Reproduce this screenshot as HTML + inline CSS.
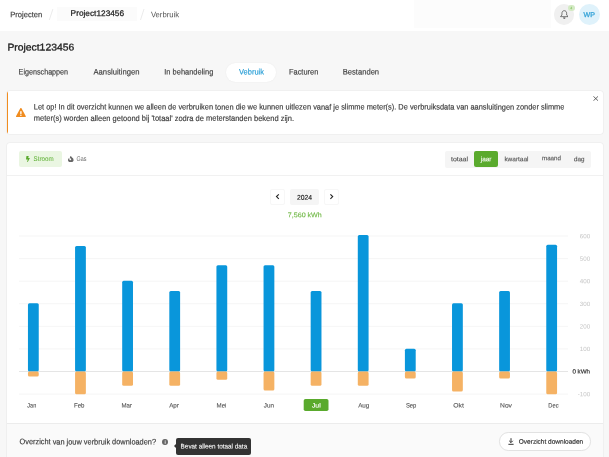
<!DOCTYPE html>
<html><head><meta charset="utf-8"><title>Verbruik</title>
<style>
html,body{margin:0;padding:0}
body{width:609px;height:457px;overflow:hidden;background:#f7f7f7;font-family:"Liberation Sans",sans-serif;color:#333;position:relative}
.abs{position:absolute}
.card{background:#fff;border-radius:3px;box-shadow:0 0 0 0.6px #ececec, 0 0 2px rgba(0,0,0,.05)}
svg text{text-rendering:geometricPrecision;font-family:"Liberation Sans",sans-serif;stroke-linejoin:round}
</style></head><body>
<div class="abs" style="left:0;top:0;width:609px;height:30.8px;background:#fff"></div>
<div class="abs" style="left:414px;top:0;width:137px;height:27.8px;background:#fcfcfc"></div>
<div class="abs" style="left:56.7px;top:6.9px;width:80.7px;height:14.1px;background:#fbfbfb"></div>
<svg class="abs" style="left:0;top:0" width="200" height="31"><path d="M52.9 9L49.3 20M144 9L140.5 20" stroke="#e6e6e6" stroke-width="0.8"/></svg>

<div class="abs" style="left:553.8px;top:4.1px;width:20.6px;height:20.6px;border-radius:50%;background:#f0f0f0"></div>
<svg class="abs" style="left:559.9px;top:9.8px" width="8.6" height="9.2" viewBox="0 0 17.2 18.4"><path d="M8.6 1.4c-2.8 0-4.7 2.1-4.7 4.9v3.9L1.2 12.6v0.7h14.8v-0.7L13.3 10.2V6.3C13.3 3.5 11.4 1.4 8.6 1.4z" fill="none" stroke="#444" stroke-width="1.4" stroke-linejoin="round"/><path d="M6.2 15a2.4 2.4 0 0 0 4.8 0z" fill="#444"/></svg>
<div class="abs" style="left:567.7px;top:4.5px;width:6.9px;height:6.9px;border-radius:50%;background:#d3eac4"></div>
<div class="abs" style="left:578.6px;top:3.6px;width:21.2px;height:21.2px;border-radius:50%;background:#dff2fb"></div>

<div class="abs" style="left:226.1px;top:62.5px;width:49.7px;height:19px;border-radius:9.5px;background:#fff;box-shadow:0 0 2px rgba(0,0,0,.06)"></div>

<div class="abs card" style="left:6.7px;top:91px;width:596.6px;height:43.4px;overflow:hidden"><div style="position:absolute;left:-0.4px;top:0;width:2.2px;height:100%;background:#f08c1f"></div></div>
<svg class="abs" style="left:16.2px;top:107.9px" width="9.8" height="9.3" viewBox="0 0 576 512" preserveAspectRatio="none"><path d="M569.517 440.013C587.975 472.007 564.806 512 527.94 512H48.054c-36.937 0-59.999-40.055-41.577-71.987L246.423 23.985c18.467-32.009 64.72-31.951 83.154 0l239.94 416.028zM288 354c-25.405 0-46 20.595-46 46s20.595 46 46 46 46-20.595 46-46-20.595-46-46-46zm-43.673-165.346l7.418 136c0.347 6.364 5.609 11.346 11.982 11.346h48.546c6.373 0 11.635-4.982 11.982-11.346l7.418-136c0.375-6.874-5.098-12.654-11.982-12.654h-63.383c-6.884 0-12.356 5.78-11.981 12.654z" fill="#f08c1f"/></svg>
<svg class="abs" style="left:592.7px;top:96px" width="5.5" height="5.1" viewBox="0 0 5.5 5.1"><path d="M0.4 0.3L5.1 4.8M5.1 0.3L0.4 4.8" stroke="#444" stroke-width="0.8"/></svg>

<div class="abs card" style="left:6.7px;top:142.9px;width:596.6px;height:330px"></div>
<div class="abs" style="left:19px;top:151.2px;width:42.7px;height:16.3px;border-radius:2px;background:#eaf6e2"></div>
<svg class="abs" style="left:26.2px;top:156.1px" width="3.9" height="6.2" viewBox="0 0 320 512"><path d="M296 160H180.6l42.6-129.8C227.2 15 215.7 0 200 0H56C44 0 33.8 8.9 32.2 20.8l-32 240C-1.7 275.2 9.5 288 24 288h118.7L96.6 482.5c-3.6 15.2 8 29.5 23.3 29.5 8.4 0 16.4-4.4 20.8-12l176-304c9.3-15.9-2.2-36-20.7-36z" fill="#5aaa2d"/></svg>
<svg class="abs" style="left:68.3px;top:156px" width="5.6" height="6.3" viewBox="0 0 384 512" preserveAspectRatio="none"><path d="M216 23.86c0-23.8-30.65-32.77-44.15-13.04C48 191.85 224 200 224 288c0 35.63-29.11 64.46-64.85 63.99C123.98 351.54 96 322.22 96 287.05v-85.51c0-21.7-26.47-32.23-41.43-16.5C27.8 213.16 0 261.33 0 320c0 105.87 86.13 192 192 192s192-86.13 192-192c0-170.29-168-193-168-296.14z" fill="#666"/></svg>

<div class="abs" style="left:444.7px;top:150.8px;width:146.3px;height:17.1px;border-radius:2px;background:#f5f5f5"></div>
<div class="abs" style="left:474.4px;top:151.3px;width:23.6px;height:16px;border-radius:2px;background:#5aaa2d"></div>
<div class="abs" style="left:6.7px;top:174.6px;width:596.6px;height:0.8px;background:#f1f1f1"></div>

<div class="abs" style="left:269.6px;top:188.6px;width:15.5px;height:16.2px;border-radius:2px;border:0.6px solid #f7f7f7;box-sizing:border-box;background:#fff"></div>
<div class="abs" style="left:290px;top:188.6px;width:29.1px;height:16.2px;border-radius:2px;background:#f5f5f5"></div>
<div class="abs" style="left:323.8px;top:188.6px;width:15.6px;height:16.2px;border-radius:2px;border:0.6px solid #f7f7f7;box-sizing:border-box;background:#fff"></div>
<svg class="abs" style="left:275px;top:193px" width="6" height="8" viewBox="0 0 6 8"><path d="M3.8 1.3L1.5 3.6l2.3 2.3" fill="none" stroke="#222" stroke-width="1.1"/></svg>
<svg class="abs" style="left:329px;top:193px" width="6" height="8" viewBox="0 0 6 8"><path d="M1.4 1.3L3.7 3.6L1.4 5.9" fill="none" stroke="#222" stroke-width="1.1"/></svg>

<div class="abs" style="left:6.7px;top:423.1px;width:596.6px;height:34px;background:#fafafa;border-top:0.8px solid #ececec;box-sizing:border-box"></div>
<div class="abs" style="left:162.1px;top:438.7px;width:5.9px;height:6.2px;border-radius:50%;background:#666"></div>
<div class="abs" style="left:176px;top:438px;width:75.1px;height:16.5px;border-radius:2px;background:#333"></div>
<div class="abs" style="left:173.6px;top:443.5px;width:0;height:0;border:2.5px solid transparent;border-right-color:#333;border-left:0"></div>
<div class="abs" style="left:498.6px;top:432.3px;width:92.6px;height:18.4px;border-radius:9.2px;border:0.7px solid #e2e2e2;box-sizing:border-box;background:#fff"></div>
<svg class="abs" style="left:507.5px;top:437.9px" width="6" height="6.8" viewBox="0 0 6 6.8"><path d="M3 0.2v4.2M1.2 2.8l1.8 1.8 1.8-1.8M0.4 6.3h5.2" fill="none" stroke="#333" stroke-width="1"/></svg>

<svg class="abs" style="left:0;top:0;will-change:transform" width="609" height="457" viewBox="0 0 609 457">
<line x1="19" x2="568" y1="236.02" y2="236.02" stroke="#f3f3f3" stroke-width="0.8"/><text x="590.2" y="238.22" font-size="6.2" fill="#c6c6c6" text-anchor="end" transform="rotate(0.06 590.2 238.22)">600</text>
<line x1="19" x2="568" y1="258.60" y2="258.60" stroke="#f3f3f3" stroke-width="0.8"/><text x="590.2" y="260.8" font-size="6.2" fill="#c6c6c6" text-anchor="end" transform="rotate(0.06 590.2 260.8)">500</text>
<line x1="19" x2="568" y1="281.18" y2="281.18" stroke="#f3f3f3" stroke-width="0.8"/><text x="590.2" y="283.38" font-size="6.2" fill="#c6c6c6" text-anchor="end" transform="rotate(0.06 590.2 283.38)">400</text>
<line x1="19" x2="568" y1="303.76" y2="303.76" stroke="#f3f3f3" stroke-width="0.8"/><text x="590.2" y="305.96" font-size="6.2" fill="#c6c6c6" text-anchor="end" transform="rotate(0.06 590.2 305.96)">300</text>
<line x1="19" x2="568" y1="326.34" y2="326.34" stroke="#f3f3f3" stroke-width="0.8"/><text x="590.2" y="328.54" font-size="6.2" fill="#c6c6c6" text-anchor="end" transform="rotate(0.06 590.2 328.54)">200</text>
<line x1="19" x2="568" y1="348.92" y2="348.92" stroke="#f3f3f3" stroke-width="0.8"/><text x="590.2" y="351.12" font-size="6.2" fill="#c6c6c6" text-anchor="end" transform="rotate(0.06 590.2 351.12)">100</text>
<line x1="19" x2="568" y1="394.08" y2="394.08" stroke="#f3f3f3" stroke-width="0.8"/><text x="590.2" y="396.28" font-size="6.2" fill="#c6c6c6" text-anchor="end" transform="rotate(0.06 590.2 396.28)">-100</text>
<line x1="19" x2="568" y1="371.50" y2="371.50" stroke="#dedede" stroke-width="0.8"/><text x="572.4" y="373.6" font-size="6.0" fill="#333" stroke="#333" stroke-width="0.18" textLength="17.6" lengthAdjust="spacingAndGlyphs" transform="rotate(0.06 581.2 373.6)">0 kWh</text>
<rect x="27.95" y="303.31" width="10.8" height="68.19" rx="1.5" fill="#0996db"/><rect x="27.95" y="371.50" width="10.8" height="4.97" rx="1.5" fill="#f5b264"/>
<rect x="75.07" y="245.96" width="10.8" height="125.54" rx="1.5" fill="#0996db"/><rect x="75.07" y="371.50" width="10.8" height="22.81" rx="1.5" fill="#f5b264"/>
<rect x="122.19" y="280.73" width="10.8" height="90.77" rx="1.5" fill="#0996db"/><rect x="122.19" y="371.50" width="10.8" height="14.23" rx="1.5" fill="#f5b264"/>
<rect x="169.31" y="290.89" width="10.8" height="80.61" rx="1.5" fill="#0996db"/><rect x="169.31" y="371.50" width="10.8" height="14.23" rx="1.5" fill="#f5b264"/>
<rect x="216.43" y="265.15" width="10.8" height="106.35" rx="1.5" fill="#0996db"/><rect x="216.43" y="371.50" width="10.8" height="8.35" rx="1.5" fill="#f5b264"/>
<rect x="263.55" y="265.15" width="10.8" height="106.35" rx="1.5" fill="#0996db"/><rect x="263.55" y="371.50" width="10.8" height="18.97" rx="1.5" fill="#f5b264"/>
<rect x="310.67" y="290.89" width="10.8" height="80.61" rx="1.5" fill="#0996db"/><rect x="310.67" y="371.50" width="10.8" height="14.23" rx="1.5" fill="#f5b264"/>
<rect x="357.79" y="235.12" width="10.8" height="136.38" rx="1.5" fill="#0996db"/><rect x="357.79" y="371.50" width="10.8" height="14.23" rx="1.5" fill="#f5b264"/>
<rect x="404.91" y="348.69" width="10.8" height="22.81" rx="1.5" fill="#0996db"/><rect x="404.91" y="371.50" width="10.8" height="7.00" rx="1.5" fill="#f5b264"/>
<rect x="452.03" y="303.31" width="10.8" height="68.19" rx="1.5" fill="#0996db"/><rect x="452.03" y="371.50" width="10.8" height="20.10" rx="1.5" fill="#f5b264"/>
<rect x="499.15" y="290.89" width="10.8" height="80.61" rx="1.5" fill="#0996db"/><rect x="499.15" y="371.50" width="10.8" height="7.00" rx="1.5" fill="#f5b264"/>
<rect x="546.27" y="244.83" width="10.8" height="126.67" rx="1.5" fill="#0996db"/><rect x="546.27" y="371.50" width="10.8" height="22.81" rx="1.5" fill="#f5b264"/>
<text x="27.35" y="407.6" font-size="6.3" fill="#555" stroke="#555" stroke-width="0.12" textLength="8.9" lengthAdjust="spacingAndGlyphs" transform="rotate(0.06 31.8 407.6)">Jan</text>
<text x="73.97" y="407.6" font-size="6.3" fill="#555" stroke="#555" stroke-width="0.12" textLength="10.5" lengthAdjust="spacingAndGlyphs" transform="rotate(0.06 79.2 407.6)">Feb</text>
<text x="121.39" y="407.6" font-size="6.3" fill="#555" stroke="#555" stroke-width="0.12" textLength="10.5" lengthAdjust="spacingAndGlyphs" transform="rotate(0.06 126.6 407.6)">Mar</text>
<text x="169.16" y="407.6" font-size="6.3" fill="#555" stroke="#555" stroke-width="0.12" textLength="9.8" lengthAdjust="spacingAndGlyphs" transform="rotate(0.06 174.1 407.6)">Apr</text>
<text x="216.53" y="407.6" font-size="6.3" fill="#555" stroke="#555" stroke-width="0.12" textLength="9.9" lengthAdjust="spacingAndGlyphs" transform="rotate(0.06 221.5 407.6)">Mei</text>
<text x="263.8" y="407.6" font-size="6.3" fill="#555" stroke="#555" stroke-width="0.12" textLength="10.2" lengthAdjust="spacingAndGlyphs" transform="rotate(0.06 268.9 407.6)">Jun</text>
<rect x="303.7" y="398.9" width="24.8" height="12.2" rx="1.8" fill="#5aaa2d"/><text x="311.92" y="407.6" font-size="6.3" fill="#fff" stroke="#fff" stroke-width="0.12" textLength="8.8" lengthAdjust="spacingAndGlyphs" transform="rotate(0.06 316.3 407.6)">Jul</text>
<text x="358.14" y="407.6" font-size="6.3" fill="#555" stroke="#555" stroke-width="0.12" textLength="11.2" lengthAdjust="spacingAndGlyphs" transform="rotate(0.06 363.7 407.6)">Aug</text>
<text x="405.91" y="407.6" font-size="6.3" fill="#555" stroke="#555" stroke-width="0.12" textLength="10.5" lengthAdjust="spacingAndGlyphs" transform="rotate(0.06 411.2 407.6)">Sep</text>
<text x="453.33" y="407.6" font-size="6.3" fill="#555" stroke="#555" stroke-width="0.12" textLength="10.5" lengthAdjust="spacingAndGlyphs" transform="rotate(0.06 458.6 407.6)">Okt</text>
<text x="500.05" y="407.6" font-size="6.3" fill="#555" stroke="#555" stroke-width="0.12" textLength="11.9" lengthAdjust="spacingAndGlyphs" transform="rotate(0.06 506.0 407.6)">Nov</text>
<text x="548.32" y="407.6" font-size="6.3" fill="#555" stroke="#555" stroke-width="0.12" textLength="10.2" lengthAdjust="spacingAndGlyphs" transform="rotate(0.06 553.4 407.6)">Dec</text>
<text x="10.3" y="17.2" font-size="8.0" fill="#3a3a3a" stroke="#3a3a3a" stroke-width="0.16" textLength="31.9" lengthAdjust="spacingAndGlyphs" transform="rotate(0.06 26.2 17.2)">Projecten</text>
<text x="70.6" y="15.9" font-size="8.1" fill="#222" stroke="#222" stroke-width="0.25" textLength="53.5" lengthAdjust="spacingAndGlyphs" transform="rotate(0.06 97.3 15.9)">Project123456</text>
<text x="150.9" y="17.2" font-size="8.0" fill="#555" textLength="28.2" lengthAdjust="spacingAndGlyphs" transform="rotate(0.06 165.0 17.2)">Verbruik</text>
<text x="583.6" y="17" font-size="6.9" fill="#38a4d8" stroke="#38a4d8" stroke-width="0.3" textLength="11.4" lengthAdjust="spacingAndGlyphs" transform="rotate(0.06 589.3 17)">WP</text>
<text x="571.2" y="9.3" font-size="3.6" fill="#6bb53f" text-anchor="middle" transform="rotate(0.06 571.2 9.3)">4</text>
<text x="7.4" y="50.5" font-size="9.8" fill="#222" stroke="#222" stroke-width="0.32" textLength="66.8" lengthAdjust="spacingAndGlyphs" transform="rotate(0.06 40.8 50.5)">Project123456</text>
<text x="18.6" y="74.45" font-size="8.0" fill="#444" stroke="#444" stroke-width="0.18" textLength="49.5" lengthAdjust="spacingAndGlyphs" transform="rotate(0.06 43.4 74.45)">Eigenschappen</text>
<text x="93.5" y="74.45" font-size="8.0" fill="#444" stroke="#444" stroke-width="0.18" textLength="46" lengthAdjust="spacingAndGlyphs" transform="rotate(0.06 116.5 74.45)">Aansluitingen</text>
<text x="164.3" y="74.45" font-size="8.0" fill="#444" stroke="#444" stroke-width="0.18" textLength="49" lengthAdjust="spacingAndGlyphs" transform="rotate(0.06 188.8 74.45)">In behandeling</text>
<text x="239" y="74.45" font-size="8.0" fill="#2a9fd6" stroke="#2a9fd6" stroke-width="0.18" textLength="25" lengthAdjust="spacingAndGlyphs" transform="rotate(0.06 251.5 74.45)">Vebruik</text>
<text x="289" y="74.45" font-size="8.0" fill="#444" stroke="#444" stroke-width="0.18" textLength="29.3" lengthAdjust="spacingAndGlyphs" transform="rotate(0.06 303.6 74.45)">Facturen</text>
<text x="342.8" y="74.45" font-size="8.0" fill="#444" stroke="#444" stroke-width="0.18" textLength="36.3" lengthAdjust="spacingAndGlyphs" transform="rotate(0.06 360.9 74.45)">Bestanden</text>
<text x="33.8" y="109.6" font-size="8.0" fill="#3a3a3a" stroke="#3a3a3a" stroke-width="0.16" textLength="98.88" lengthAdjust="spacingAndGlyphs" transform="rotate(0.06 83.2 109.6)">Let op! In dit overzicht kunnen</text>
<text x="134.74" y="109.6" font-size="8.0" fill="#3a3a3a" stroke="#3a3a3a" stroke-width="0.16" textLength="98.88" lengthAdjust="spacingAndGlyphs" transform="rotate(0.06 184.2 109.6)">we alleen de verbruiken tonen</text>
<text x="235.68" y="109.6" font-size="8.0" fill="#3a3a3a" stroke="#3a3a3a" stroke-width="0.16" textLength="103.42" lengthAdjust="spacingAndGlyphs" transform="rotate(0.06 287.4 109.6)">die we kunnen uitlezen vanaf je</text>
<text x="341.15" y="109.6" font-size="8.0" fill="#3a3a3a" stroke="#3a3a3a" stroke-width="0.16" textLength="66.71" lengthAdjust="spacingAndGlyphs" transform="rotate(0.06 374.5 109.6)">slimme meter(s). De</text>
<text x="409.92" y="109.6" font-size="8.0" fill="#3a3a3a" stroke="#3a3a3a" stroke-width="0.16" textLength="104.24" lengthAdjust="spacingAndGlyphs" transform="rotate(0.06 462.0 109.6)">verbruiksdata van aansluitingen</text>
<text x="516.21" y="109.6" font-size="8.0" fill="#3a3a3a" stroke="#3a3a3a" stroke-width="0.16" textLength="48.19" lengthAdjust="spacingAndGlyphs" transform="rotate(0.06 540.3 109.6)">zonder slimme</text>
<text x="33.8" y="120.9" font-size="8.0" fill="#3a3a3a" stroke="#3a3a3a" stroke-width="0.16" textLength="105.93" lengthAdjust="spacingAndGlyphs" transform="rotate(0.06 86.8 120.9)">meter(s) worden alleen getoond</text>
<text x="141.82" y="120.9" font-size="8.0" fill="#3a3a3a" stroke="#3a3a3a" stroke-width="0.16" textLength="62.09" lengthAdjust="spacingAndGlyphs" transform="rotate(0.06 172.9 120.9)">bij 'totaal' zodra de</text>
<text x="206.0" y="120.9" font-size="8.0" fill="#3a3a3a" stroke="#3a3a3a" stroke-width="0.16" textLength="88.0" lengthAdjust="spacingAndGlyphs" transform="rotate(0.06 250.0 120.9)">meterstanden bekend zijn.</text>
<text x="33.6" y="161.1" font-size="6.8" fill="#62b23a" stroke="#62b23a" stroke-width="0.05" textLength="20.0" lengthAdjust="spacingAndGlyphs" transform="rotate(0.06 43.6 161.1)">Stroom</text>
<text x="76.5" y="161.1" font-size="6.8" fill="#6a6a6a" textLength="9.9" lengthAdjust="spacingAndGlyphs" transform="rotate(0.06 81.5 161.1)">Gas</text>
<text x="451" y="161.3" font-size="6.5" fill="#444" stroke="#444" stroke-width="0.08" textLength="17" lengthAdjust="spacingAndGlyphs" transform="rotate(0.06 459.5 161.3)">totaal</text>
<text x="480.7" y="161.3" font-size="6.5" fill="#fff" stroke="#fff" stroke-width="0.1" textLength="10.8" lengthAdjust="spacingAndGlyphs" transform="rotate(0.06 486.1 161.3)">jaar</text>
<text x="504.4" y="161.3" font-size="6.5" fill="#444" stroke="#444" stroke-width="0.08" textLength="24.1" lengthAdjust="spacingAndGlyphs" transform="rotate(0.06 516.4 161.3)">kwartaal</text>
<text x="542" y="160.3" font-size="6.5" fill="#444" stroke="#444" stroke-width="0.08" textLength="18.9" lengthAdjust="spacingAndGlyphs" transform="rotate(0.06 551.5 160.3)">maand</text>
<text x="574" y="161.3" font-size="6.5" fill="#444" stroke="#444" stroke-width="0.08" textLength="10.5" lengthAdjust="spacingAndGlyphs" transform="rotate(0.06 579.2 161.3)">dag</text>
<text x="296.9" y="199.7" font-size="6.9" fill="#222" stroke="#222" stroke-width="0.15" textLength="15.1" lengthAdjust="spacingAndGlyphs" transform="rotate(0.06 304.4 199.7)">2024</text>
<text x="287.8" y="217.3" font-size="6.8" fill="#6bb53f" stroke="#6bb53f" stroke-width="0.1" textLength="34" lengthAdjust="spacingAndGlyphs" transform="rotate(0.06 304.8 217.3)">7,560 kWh</text>
<text x="19.5" y="444.4" font-size="8.0" fill="#3a3a3a" stroke="#3a3a3a" stroke-width="0.16" textLength="90.57" lengthAdjust="spacingAndGlyphs" transform="rotate(0.06 64.8 444.4)">Overzicht van jouw verbruik</text>
<text x="112.12" y="444.4" font-size="8.0" fill="#3a3a3a" stroke="#3a3a3a" stroke-width="0.16" textLength="43.88" lengthAdjust="spacingAndGlyphs" transform="rotate(0.06 134.1 444.4)">downloaden?</text>
<text x="180.6" y="448.6" font-size="6.7" fill="#fff" stroke="#fff" stroke-width="0.08" textLength="66.6" lengthAdjust="spacingAndGlyphs" transform="rotate(0.06 213.9 448.6)">Bevat alleen totaal data</text>
<text x="518.8" y="443.8" font-size="6.6" fill="#333" stroke="#333" stroke-width="0.18" textLength="64.4" lengthAdjust="spacingAndGlyphs" transform="rotate(0.06 551.0 443.8)">Overzicht downloaden</text>
<text x="165.05" y="443.7" font-size="4.8" fill="#fff" font-weight="bold" text-anchor="middle" transform="rotate(0.06 165.1 443.7)">i</text>
</svg>
</body></html>
